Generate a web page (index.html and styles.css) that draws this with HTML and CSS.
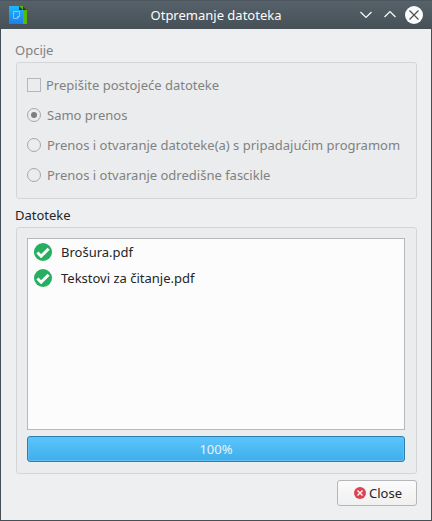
FILE: index.html
```
<!DOCTYPE html>
<html lang="hr">
<head>
<meta charset="utf-8">
<title>Otpremanje datoteka</title>
<link rel="stylesheet" href="styles.css">
</head>
<body>
<div class="window">
  <header class="titlebar">
    <svg class="app-icon" width="18" height="18" viewBox="0 0 18 18">
      <defs><linearGradient id="doc" x1="0" y1="0" x2="0" y2="1"><stop offset="0" stop-color="#1cb8f8"/><stop offset="1" stop-color="#1c7eef"/></linearGradient></defs>
      <path d="M10 0h4l4 4v14h-8z" fill="#58b80a"/>
      <path d="M14 0v4h4z" fill="#2c3a34"/>
      <path d="M0 0h10l4 4v14H0z" fill="url(#doc)"/>
      <path d="M10 0v4h4z" fill="#263238"/>
      <path d="M4.500 5.500h6v5l-2 2h-4zM10.500 10.500h-2v2" fill="none" stroke="#7cc8fc"/>
    </svg>
    <h1 class="title">Otpremanje datoteka</h1>
    <div class="controls">
      <svg width="12" height="18" viewBox="0 0 12 18"><path d="M.5 6L6 11.500 11.500 6"/></svg>
      <svg width="12" height="18" viewBox="0 0 12 18"><path d="M.5 11L6 5.500l5.500 5.500"/></svg>
      <svg class="exit" width="18" height="18" viewBox="0 0 18 18"><circle class="disc" cx="9" cy="9" r="9"/><path class="cross" d="M4.500 4.500l9 9M13.500 4.500l-9 9"/></svg>
    </div>
  </header>
  <main class="content">
    <h2 class="heading disabled">Opcije</h2>
    <section class="group options disabled">
      <div class="option check"><span class="box"></span>Prepišite postojeće datoteke</div>
      <div class="option"><span class="radio selected"></span>Samo prenos</div>
      <div class="option"><span class="radio"></span>Prenos i otvaranje datoteke(a) s pripadajućim programom</div>
      <div class="option"><span class="radio"></span>Prenos i otvaranje odredišne fascikle</div>
    </section>
    <h2 class="heading files-heading">Datoteke</h2>
    <section class="group files">
      <ul class="list">
        <li class="file"><svg width="18" height="18" viewBox="0 0 18 18"><circle cx="9" cy="9" r="9" fill="#27ae60"/><path d="M3.400 9.500l3.700 3.700 7.500-7.500" fill="none" stroke="#fff" stroke-width="3"/></svg>Brošura.pdf</li>
        <li class="file"><svg width="18" height="18" viewBox="0 0 18 18"><circle cx="9" cy="9" r="9" fill="#27ae60"/><path d="M3.400 9.500l3.700 3.700 7.500-7.500" fill="none" stroke="#fff" stroke-width="3"/></svg>Tekstovi za čitanje.pdf</li>
      </ul>
      <div class="progress">100%</div>
    </section>
    <button class="close"><svg width="12" height="12" viewBox="0 0 12 12"><circle cx="6" cy="6" r="6" fill="#da4453"/><path d="M3.500 3.500l5 5M8.500 3.500l-5 5" stroke="#fff" stroke-width="1.300"/></svg>Close</button>
  </main>
</div>
</body>
</html>
```
FILE: styles.css
```
* { box-sizing: border-box; }
body {
  margin: 0;
  font: 13px/18px "Noto Sans", sans-serif;
  color: #232629;
}
svg { display: block; flex: none; }
.window {
  width: 432px;
  height: 521px;
  display: flex;
  flex-direction: column;
  background: #eeeff1;
  border: 1px solid #475057;
  border-top: 0;
}
.titlebar {
  height: 29px;
  margin: 0 -1px;
  padding: 0 9px;
  display: grid;
  grid-template-columns: 66px 1fr 66px;
  align-items: center;
  background: linear-gradient(#566169, #475057);
  border-top: 1px solid #4b565e;
}
.title {
  margin: 0;
  font-size: 13px;
  font-weight: 400;
  line-height: 18px;
  text-align: center;
  color: #fcfcfc;
}
.controls {
  display: flex;
  justify-content: flex-end;
  gap: 12px;
}
.controls path { fill: none; stroke: #fcfcfc; stroke-width: 1.2; }
.controls .exit { margin-left: -3px; }
.controls .disc { fill: #fcfcfc; }
.controls .cross { stroke: #475057; }
.content {
  flex: 1;
  display: flex;
  flex-direction: column;
  padding: 12px 14px 14px 15px;
}
.heading {
  margin: 0 0 3px -1px;
  font-size: 13px;
  font-weight: 400;
  line-height: 18px;
}
.files-heading { margin-top: 7px; }
.disabled { color: #7f8283; }
.group {
  border: 1px solid #d3d5d7;
  border-radius: 3px;
  background: #ebeced;
}
.options {
  height: 137px;
  padding: 7px 10px;
}
.option {
  height: 30px;
  display: flex;
  align-items: center;
  gap: 6px;
  white-space: nowrap;
}
.option.check { gap: 5px; }
.box, .radio {
  width: 14px;
  height: 14px;
  border: 1px solid #b5b7b8;
  flex: none;
}
.radio {
  border-color: #a6a8aa;
  border-radius: 50%;
  display: grid;
  place-items: center;
}
.radio.selected::before {
  content: "";
  width: 6px;
  height: 6px;
  border-radius: 50%;
  background: #7c7e7f;
}
.files {
  height: 247px;
  padding: 10px 11px 11px 10px;
  display: flex;
  flex-direction: column;
  gap: 6px;
}
.list {
  flex: 1;
  margin: 0;
  padding: 0 6px;
  list-style: none;
  background: #fcfcfc;
  border: 1px solid #b7b9ba;
}
.file {
  height: 26px;
  display: flex;
  align-items: center;
  gap: 9px;
}
.progress {
  height: 26px;
  line-height: 24px;
  text-align: center;
  color: #eff0f1;
  background: linear-gradient(#5bc5fd, #3eaeea);
  border: 1px solid #2c7fae;
  border-radius: 3px;
  box-shadow: inset 0 0 0 1px #62bff0;
}
.close {
  align-self: flex-end;
  width: 80px;
  height: 26px;
  margin-top: 6px;
  padding: 0 0 0 2px;
  display: flex;
  align-items: center;
  justify-content: center;
  gap: 3px;
  font: inherit;
  color: inherit;
  background: linear-gradient(#fbfbfb, #f0f0f1);
  border: 1px solid #b4b6b8;
  border-radius: 3px;
}
```
